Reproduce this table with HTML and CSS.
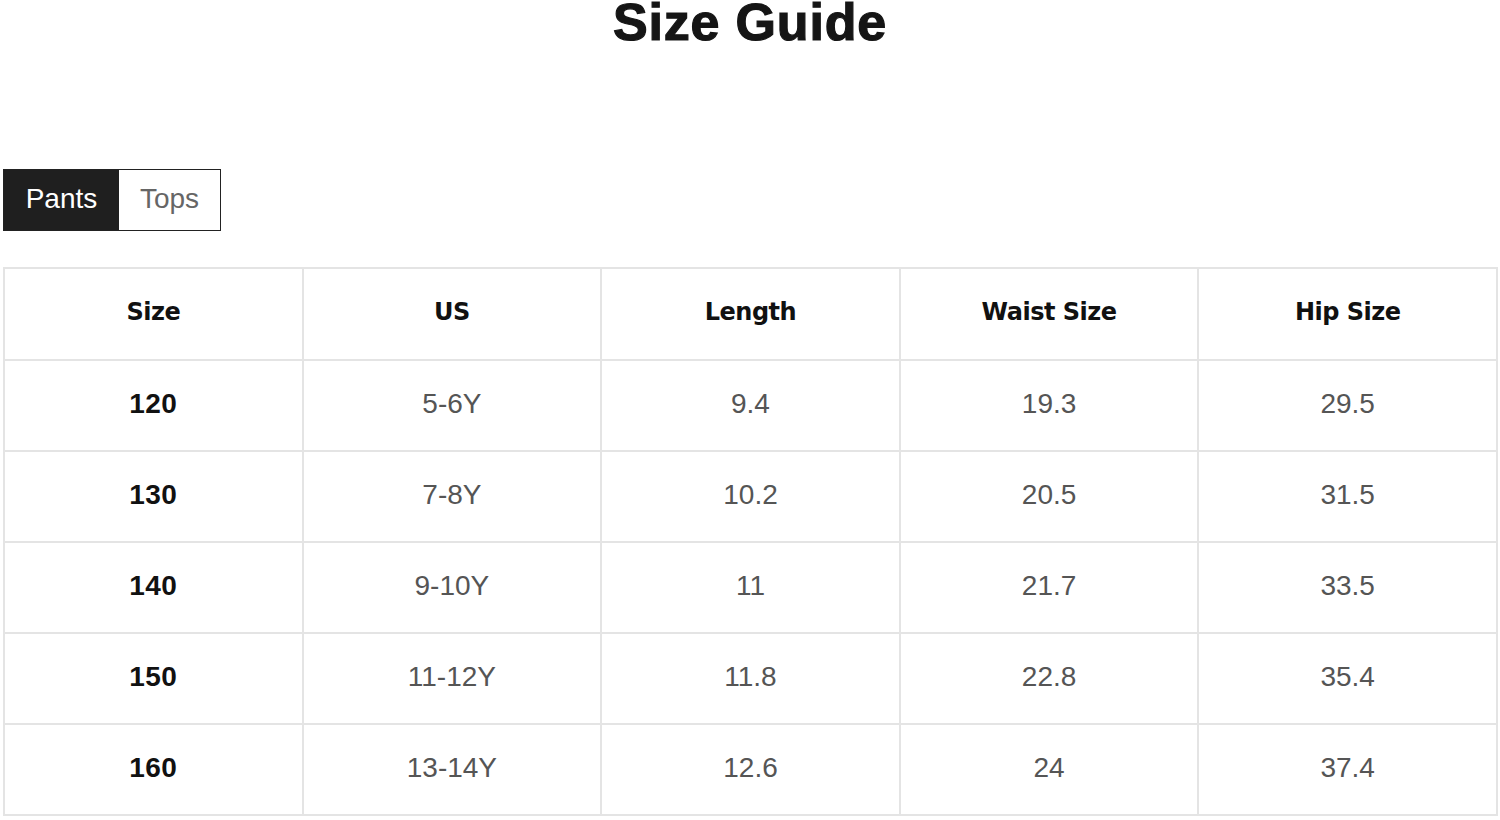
FILE: index.html
```html
<!DOCTYPE html>
<html>
<head>
<meta charset="utf-8">
<link rel="stylesheet" href="styles.css">
</head>
<body>
<h1 class="title">Size Guide</h1>
<div class="tabs">
  <div class="tab active">Pants</div>
  <div class="tab">Tops</div>
</div>
<table class="size-table">
  <thead>
    <tr><th>Size</th><th>US</th><th>Length</th><th>Waist Size</th><th>Hip Size</th></tr>
  </thead>
  <tbody>
    <tr><td class="sz">120</td><td>5-6Y</td><td>9.4</td><td>19.3</td><td>29.5</td></tr>
    <tr><td class="sz">130</td><td>7-8Y</td><td>10.2</td><td>20.5</td><td>31.5</td></tr>
    <tr><td class="sz">140</td><td>9-10Y</td><td>11</td><td>21.7</td><td>33.5</td></tr>
    <tr><td class="sz">150</td><td>11-12Y</td><td>11.8</td><td>22.8</td><td>35.4</td></tr>
    <tr><td class="sz">160</td><td>13-14Y</td><td>12.6</td><td>24</td><td>37.4</td></tr>
  </tbody>
</table>
</body>
</html>
```
FILE: styles.css
```css
html, body {
  margin: 0;
  padding: 0;
  background: #fff;
}
body {
  font-family: "Liberation Sans", Arial, sans-serif;
  width: 1500px;
  height: 820px;
  overflow: hidden;
}
.title {
  margin: 0;
  text-align: center;
  font-size: 52px;
  line-height: 44px;
  height: 44px;
  font-weight: bold;
  color: #151515;
  letter-spacing: 0.8px;
  -webkit-text-stroke: 1.2px #151515;
}
.tabs {
  display: flex;
  margin: 125px 0 0 3px;
  width: max-content;
  border: 1px solid #222;
}
.tab {
  height: 60px;
  display: flex;
  align-items: center;
  justify-content: center;
  padding-bottom: 2px;
  box-sizing: border-box;
  font-size: 28px;
  color: #666;
  background: #fff;
}
.tab.active {
  width: 115px;
  background: #1f1f1f;
  color: #fff;
}
.tab:not(.active) {
  width: 101px;
}
.size-table {
  margin: 36px 0 0 3px;
  width: 1495px;
  border-collapse: collapse;
  table-layout: fixed;
}
.size-table th, .size-table td {
  border: 2px solid #e4e4e4;
  text-align: center;
  padding: 0 0 4px;
}
.size-table th {
  height: 86px;
  font-family: "DejaVu Sans", Tahoma, sans-serif;
  font-weight: bold;
  font-size: 24px;
  color: #111;
  letter-spacing: -0.5px;
}
.size-table td {
  height: 85px;
  font-size: 28px;
  color: #555;
}
.size-table td.sz {
  font-weight: bold;
  color: #111;
  font-size: 28px;
  letter-spacing: 0.5px;
}
```
